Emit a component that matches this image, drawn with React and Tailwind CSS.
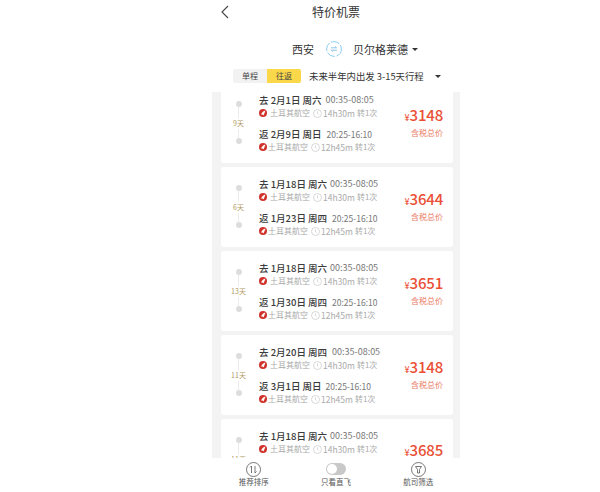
import React from "react";

const font = { fontFamily: '"Noto Sans CJK SC","Noto Sans",sans-serif' };

function Airline() {
  return (
    <svg width="8" height="8" viewBox="0 0 8 8" className="shrink-0">
      <circle cx="4" cy="4" r="4" fill="#d0332b" />
      <path d="M2 5.5C3 3 4.5 2 6.5 1.5 5.8 3 5.6 4.5 4.5 6.5 4.2 5.5 3 5.2 2 5.5Z" fill="#fff" />
    </svg>
  );
}

function Clock() {
  return (
    <svg width="9" height="9" viewBox="0 0 9 9" className="shrink-0" fill="none" stroke="#c0c0c0" strokeWidth="0.6">
      <circle cx="4.5" cy="4.5" r="4" />
      <path d="M4.5 2.3v2.4l1 .8" />
    </svg>
  );
}

function Leg({ date, time, dur, gap, nameGap, clockGap, timeSize }) {
  return (
    <div className="flex flex-col">
      <div className="flex items-center h-[12px] text-[9.5px] text-[#3a3a3a] whitespace-nowrap font-medium">
        <span>{date}</span>
        <span className="font-normal text-[#777777]" style={{ marginLeft: gap, fontSize: timeSize }}>{time}</span>
      </div>
      <div className="flex items-center h-[14px] text-[#aaaaaa] whitespace-nowrap">
        <Airline />
        <span className="text-[8px]" style={{ marginLeft: nameGap, marginRight: clockGap }}>土耳其航空</span>
        <Clock />
        <span className="ml-[1px] text-[8.5px]">{dur}</span>
        <span className="ml-[2px] text-[8px]">转1次</span>
      </div>
    </div>
  );
}

function Card({ days, go, goTime, goGap, back, backTime, backGap, price, pr, top }) {
  return (
    <div className="relative h-[80px] shrink-0 bg-white rounded-[3px] flex">
      <div className="w-[35px] flex flex-col items-center pt-[18px]">
        <span className="w-[6px] h-[6px] rounded-full bg-[#dddddd]" />
        <span className="w-px h-[11px] bg-[#ececec]" />
        <span className="text-[7px] leading-[11px] text-[#b39a63]">{days}天</span>
        <span className="w-px h-[9px] bg-[#ececec]" />
        <span className="w-[6px] h-[6px] rounded-full bg-[#dddddd]" />
      </div>
      <div className="ml-[3px] pt-[11px] flex flex-col gap-[8px]">
        <Leg date={go} time={goTime} gap={goGap} dur="14h30m" nameGap={3} clockGap={3} timeSize="9px" />
        <Leg date={back} time={backTime} gap={backGap} dur="12h45m" nameGap={1} clockGap={3} timeSize="8.5px" />
      </div>
      <div className="absolute flex flex-col items-end" style={{ right: pr, top }}>
        <div className="flex items-baseline text-[#ea4f35] leading-[16px]">
          <span className="text-[9px] font-medium">¥</span>
          <span className="text-[15px] font-medium tracking-[-0.2px]">{price}</span>
        </div>
        <span className="mt-[2px] text-[8px] leading-[10px] text-[#ea7a66]">含税总价</span>
      </div>
    </div>
  );
}

export default function App() {
  return (
    <div className="relative w-[600px] h-[492px] bg-white overflow-hidden" style={font}>
      <div className="ml-[212px] w-[248px] h-[92px] flex flex-col">
        <div className="relative h-[24px] flex items-center justify-center text-[12px] text-[#333333]">
          <svg width="9" height="14" viewBox="0 0 9 14" fill="none" stroke="#444444" strokeWidth="1.1" className="absolute left-[8px] top-[5px]">
            <path d="M8 1 2 7l6 6" />
          </svg>
          <span>特价机票</span>
        </div>
        <div className="h-[26px] mt-[12px] flex items-center text-[11px] text-[#333333] pl-[80px]">
          <span>西安</span>
          <svg width="16" height="16" viewBox="0 0 16 16" fill="none" className="ml-[12px] mr-[11px]">
            <circle cx="8" cy="8" r="7.4" stroke="#8ccdf0" strokeDasharray="9 1.5" />
            <path d="M5 6.8h5.5L9 5.5M11 9.2H5.5L7 10.5" stroke="#5caede" strokeWidth="0.7" />
          </svg>
          <span>贝尔格莱德</span>
          <span className="ml-[4px] w-0 h-0 border-x-[3px] border-x-transparent border-t-[3px] border-t-[#333333]" />
        </div>
        <div className="mt-[7px] flex items-center h-[14px] pl-[21px]">
          <span className="w-[34px] h-[14px] rounded-l-[2px] bg-[#f2f2f2] text-[8px] leading-[14px] text-center text-[#444444]">单程</span>
          <span className="w-[34px] h-[14px] rounded-r-[2px] bg-[#fbd84a] text-[8px] leading-[14px] text-center text-[#444444]">往返</span>
          <span className="ml-[8px] text-[9.4px] text-[#333333] whitespace-nowrap">未来半年内出发 3-15天行程</span>
          <span className="ml-[11px] w-0 h-0 border-x-[3px] border-x-transparent border-t-[3px] border-t-[#333333]" />
        </div>
      </div>
      <div className="ml-[212px] w-[248px] h-[366px] bg-[#f3f3f3] overflow-hidden pl-[9px] pr-[7px]">
        <div className="-mt-[9px] flex flex-col gap-[4px]">
          <Card days={9} go="去 2月1日 周六" goTime="00:35-08:05" goGap={4} back="返 2月9日 周日" backTime="20:25-16:10" backGap={5} price="3148" pr={10} top={24} />
          <Card days={6} go="去 1月18日 周六" goTime="00:35-08:05" goGap={3} back="返 1月23日 周四" backTime="20:25-16:10" backGap={5} price="3644" pr={10} top={24} />
          <Card days={13} go="去 1月18日 周六" goTime="00:35-08:05" goGap={3} back="返 1月30日 周四" backTime="20:25-16:10" backGap={5} price="3651" pr={10} top={24} />
          <Card days={11} go="去 2月20日 周四" goTime="00:35-08:05" goGap={5} back="返 3月1日 周日" backTime="20:25-16:10" backGap={4} price="3148" pr={10} top={24} />
          <Card days={11} go="去 1月18日 周六" goTime="00:35-08:05" goGap={3} back="返 1月23日 周四" backTime="20:25-16:10" backGap={5} price="3685" pr={10} top={23} />
        </div>
      </div>
      <div className="absolute left-[212px] top-[458px] w-[248px] h-[34px] bg-white flex items-start text-[7.5px] leading-[10px] text-[#555555]">
        <div className="w-[84px] flex flex-col items-center">
          <svg width="15" height="15" viewBox="0 0 15 15" fill="none" stroke="#555555" strokeWidth="0.8" className="mt-[4px]">
            <circle cx="7.5" cy="7.5" r="7" />
            <path d="M5.5 11V4L4 5.5M9 4v7l1.5-1.5" />
          </svg>
          <span>推荐排序</span>
        </div>
        <div className="w-[82px] flex flex-col items-center">
          <div className="mt-[5px] w-[20px] h-[12px] rounded-full bg-[#c8c8c8] p-[1px]">
            <div className="w-[10px] h-[10px] rounded-full bg-white" />
          </div>
          <span className="mt-[2px]">只看直飞</span>
        </div>
        <div className="w-[84px] flex flex-col items-center">
          <svg width="15" height="15" viewBox="0 0 15 15" fill="none" stroke="#555555" strokeWidth="0.8" className="mt-[4px]">
            <circle cx="7.5" cy="7.5" r="7" />
            <path d="M4.5 4.5h6L8.5 7.5V11h-2V7.5Z" />
          </svg>
          <span>航司筛选</span>
        </div>
      </div>
    </div>
  );
}
